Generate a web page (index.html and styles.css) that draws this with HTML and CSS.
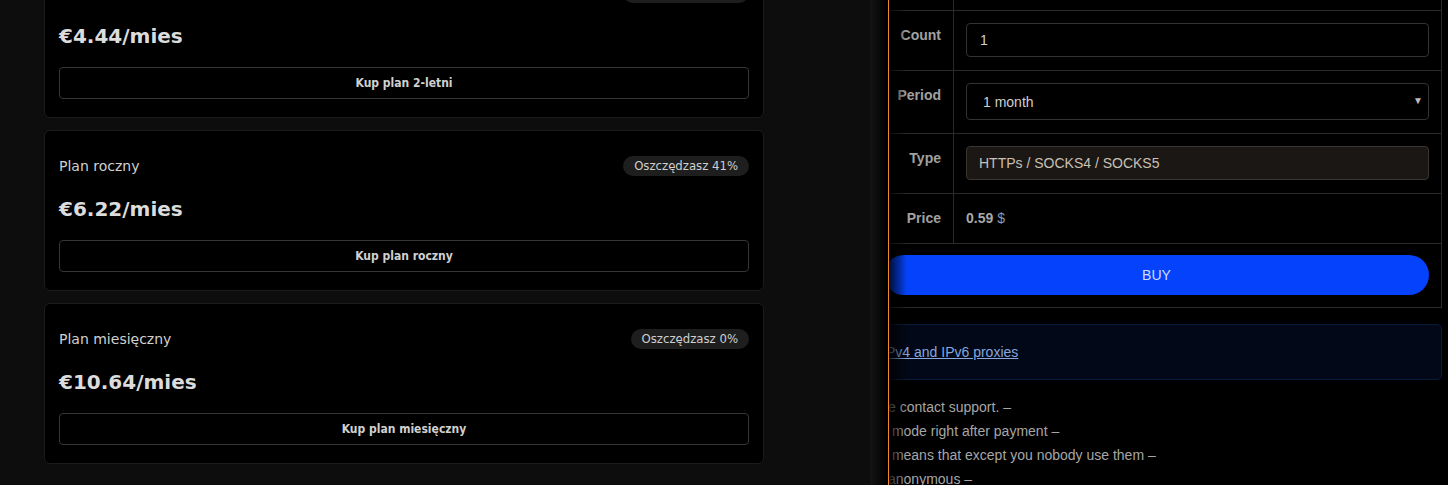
FILE: index.html
```html
<!DOCTYPE html>
<html lang="pl">
<head>
<meta charset="utf-8">
<title>Plany</title>
<link rel="stylesheet" href="styles.css">
</head>
<body>
<div class="split">
  <main class="plans">
    <div class="plan-list">
      <article class="plan">
        <div class="plan-head">
          <span class="plan-name">Plan 2-letni</span>
          <span class="badge">Oszczędzasz 58%</span>
        </div>
        <div class="plan-price">€4.44/mies</div>
        <button class="plan-buy">Kup plan 2-letni</button>
      </article>
      <article class="plan">
        <div class="plan-head">
          <span class="plan-name">Plan roczny</span>
          <span class="badge">Oszczędzasz 41%</span>
        </div>
        <div class="plan-price">€6.22/mies</div>
        <button class="plan-buy">Kup plan roczny</button>
      </article>
      <article class="plan">
        <div class="plan-head">
          <span class="plan-name">Plan miesięczny</span>
          <span class="badge">Oszczędzasz 0%</span>
        </div>
        <div class="plan-price">€10.64/mies</div>
        <button class="plan-buy">Kup plan miesięczny</button>
      </article>
    </div>
  </main>
  <div class="seam"></div>
  <section class="order">
    <div class="order-inner">
      <table class="order-table">
        <colgroup><col class="col-label"><col></colgroup>
        <tr class="row-top">
          <th></th>
          <td></td>
        </tr>
        <tr class="row-count">
          <th>Count</th>
          <td><input class="field" type="text" value="1"></td>
        </tr>
        <tr class="row-period">
          <th>Period</th>
          <td>
            <div class="select-wrap">
              <select class="field field-select"><option>1 month</option></select>
            </div>
          </td>
        </tr>
        <tr class="row-type">
          <th>Type</th>
          <td><input class="field field-readonly" type="text" value="HTTPs / SOCKS4 / SOCKS5" readonly></td>
        </tr>
        <tr class="row-price">
          <th>Price</th>
          <td class="price-cell"><b>0.59</b> <span class="currency">$</span></td>
        </tr>
        <tr class="row-buy">
          <td colspan="2"><button class="buy-btn">BUY</button></td>
        </tr>
      </table>
      <div class="info-box"><a href="#" class="info-link">Pv4 and IPv6 proxies</a></div>
      <ul class="notes">
        <li>e contact support. –</li>
        <li> mode right after payment –</li>
        <li> means that except you nobody use them –</li>
        <li>anonymous –</li>
      </ul>
    </div>
  </section>
</div>
</body>
</html>
```

FILE: styles.css
```css
* { box-sizing: border-box; }

html, body {
  margin: 0;
  padding: 0;
  height: 485px;
  overflow: hidden;
  background: #000;
}

.split {
  display: flex;
  height: 485px;
}

/* ---------- left: plans ---------- */
.plans {
  flex: none;
  width: 870px;
  background: #0d0d0d;
  padding-left: 44px;
  overflow: hidden;
  font-family: "DejaVu Sans", "Noto Sans", sans-serif;
}

.plan-list {
  width: 720px;
  margin-top: -43px;
  display: flex;
  flex-direction: column;
  gap: 12px;
}

.plan {
  background: #000;
  border: 1px solid #1b1b1b;
  border-radius: 6px;
  padding: 25px 14px 18px;
  height: 161px;
  display: flex;
  flex-direction: column;
}

.plan-head {
  height: 20px;
  display: flex;
  align-items: center;
  justify-content: space-between;
}

.plan-name {
  font-size: 14px;
  color: #d0d0d0;
}

.badge {
  height: 20px;
  line-height: 20px;
  padding: 0 11px;
  border-radius: 10px;
  background: #1e1e1e;
  color: #cfcfcf;
  font-size: 13px;
  font-stretch: condensed;
}

.plan-price {
  margin-top: 19px;
  line-height: 28px;
  font-size: 20px;
  font-weight: bold;
  color: #dcdcdc;
}

.plan-buy {
  margin-top: 17px;
  height: 32px;
  width: 100%;
  background: #000;
  border: 1px solid #363636;
  border-radius: 4px;
  color: #d0d0d0;
  font-family: "DejaVu Sans", "Noto Sans", sans-serif;
  font-size: 12px;
  font-weight: bold;
  font-stretch: condensed;
  padding: 0;
}

/* ---------- seam ---------- */
.seam {
  flex: none;
  width: 18px;
  background: linear-gradient(to right, #141414, #000);
}

/* ---------- right: order ---------- */
.order {
  flex: 1;
  position: relative;
  overflow: hidden;
  background: #000;
  border-left: 1px solid #f0882c;
  font-family: "Liberation Sans", Arial, sans-serif;
  font-size: 14px;
}

.order::before {
  content: "";
  position: absolute;
  left: 0;
  top: 0;
  bottom: 0;
  width: 18px;
  background: linear-gradient(to right, rgba(0,0,0,0.8), rgba(0,0,0,0));
  z-index: 2;
  pointer-events: none;
}

.order-inner {
  margin-left: -19px;
  padding-right: 6px;
}

.order-table {
  width: 100%;
  table-layout: fixed;
  border-collapse: collapse;
  margin-top: -50px;
}

.col-label { width: 83px; }

.order-table th,
.order-table td {
  border: 1px solid #2a2a2a;
}

.order-table th {
  vertical-align: top;
  text-align: right;
  padding: 14px 12px 0 0;
  line-height: 20px;
  font-weight: bold;
  color: #a0a0a0;
}

.order-table td {
  padding: 12px 12px 13px;
}

.row-top th,
.row-top td {
  height: 60px;
}

.field {
  display: block;
  width: 100%;
  height: 34px;
  margin: 0;
  background: #000;
  border: 1px solid #333;
  border-radius: 4px;
  color: #d0d0d0;
  font-family: "Liberation Sans", Arial, sans-serif;
  font-size: 14px;
  padding: 0 13px;
  outline: none;
}

.select-wrap { position: relative; }

.select-wrap::after {
  content: "▼";
  position: absolute;
  right: 6px;
  top: 13px;
  font-size: 10px;
  line-height: 10px;
  color: #bdbdbd;
  pointer-events: none;
}

.field-select {
  height: 37px;
  -webkit-appearance: none;
  appearance: none;
  padding: 0 16px;
}

.field-readonly {
  background: #1a1714;
  border-color: #3a352f;
  color: #c9c0b6;
  padding: 0 12px;
}

.row-price td.price-cell {
  padding: 12px 12px 13px;
  line-height: 24px;
  color: #a3a3a3;
}

.price-cell b { color: #a8a8a8; }

.currency { color: #8a9bb2; }

.row-buy td {
  padding: 11px 12px 12px 13px;
}

.buy-btn {
  display: block;
  width: 100%;
  height: 40px;
  border: none;
  border-radius: 20px;
  background: #0443fb;
  color: #d4dcfa;
  font-family: "Liberation Sans", Arial, sans-serif;
  font-size: 14px;
  padding: 0;
}

.info-box {
  margin-top: 16px;
  padding: 17px 16px 17px 15px;
  line-height: 20px;
  background: #020818;
  border: 1px solid #0b1a3a;
  border-radius: 5px;
}

.info-link {
  color: #86a6dc;
  text-decoration: underline;
}

.notes {
  list-style: none;
  margin: 15px 0 0;
  padding: 0 0 0 18px;
  line-height: 24px;
  color: #a6a6a6;
}

.notes li {
  white-space: pre;
}
```
